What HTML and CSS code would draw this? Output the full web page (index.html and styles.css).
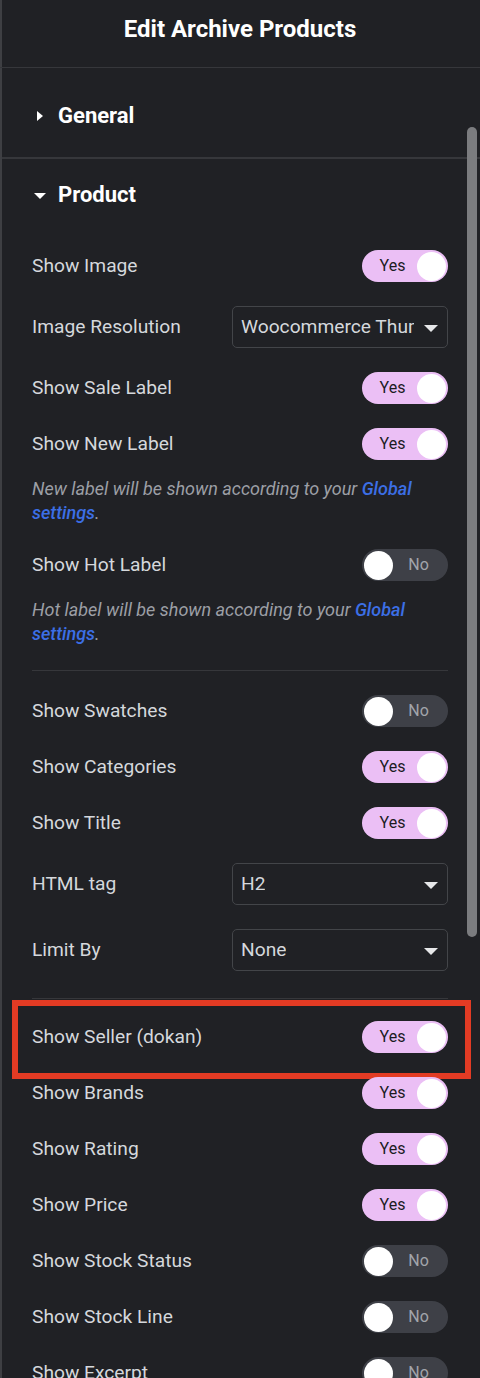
FILE: index.html
```html
<!DOCTYPE html>
<html lang="en">
<head>
<meta charset="utf-8">
<title>Edit Archive Products</title>
<link rel="stylesheet" href="styles.css">
</head>
<body>
<div class="panel">
  <header class="panel-header">
    <h1 class="panel-title">Edit Archive Products</h1>
  </header>

  <div class="panel-body">
    <section class="section section-closed">
      <div class="section-head">
        <span class="caret caret-right"></span>
        <span class="section-title">General</span>
      </div>
    </section>

    <section class="section section-open">
      <div class="section-head">
        <span class="caret caret-down"></span>
        <span class="section-title">Product</span>
      </div>

      <div class="controls">
        <div class="control">
          <span class="label">Show Image</span>
          <span class="switch on"><span class="switch-text">Yes</span><span class="knob"></span></span>
        </div>
        <div class="control control-select">
          <span class="label">Image Resolution</span>
          <span class="select"><span class="select-value">Woocommerce Thumbnail</span><span class="arrow"></span></span>
        </div>
        <div class="control">
          <span class="label">Show Sale Label</span>
          <span class="switch on"><span class="switch-text">Yes</span><span class="knob"></span></span>
        </div>
        <div class="control">
          <span class="label">Show New Label</span>
          <span class="switch on"><span class="switch-text">Yes</span><span class="knob"></span></span>
        </div>
        <p class="help">New label will be shown according to your <a class="help-link">Global settings</a>.</p>
        <div class="control">
          <span class="label">Show Hot Label</span>
          <span class="switch off"><span class="knob"></span><span class="switch-text">No</span></span>
        </div>
        <p class="help">Hot label will be shown according to your <a class="help-link">Global settings</a>.</p>

        <hr class="divider">

        <div class="control">
          <span class="label">Show Swatches</span>
          <span class="switch off"><span class="knob"></span><span class="switch-text">No</span></span>
        </div>
        <div class="control">
          <span class="label">Show Categories</span>
          <span class="switch on"><span class="switch-text">Yes</span><span class="knob"></span></span>
        </div>
        <div class="control">
          <span class="label">Show Title</span>
          <span class="switch on"><span class="switch-text">Yes</span><span class="knob"></span></span>
        </div>
        <div class="control control-select">
          <span class="label">HTML tag</span>
          <span class="select"><span class="select-value">H2</span><span class="arrow"></span></span>
        </div>
        <div class="control control-select">
          <span class="label">Limit By</span>
          <span class="select"><span class="select-value">None</span><span class="arrow"></span></span>
        </div>

        <hr class="divider divider-2">

        <div class="control highlight">
          <span class="label">Show Seller (dokan)</span>
          <span class="switch on"><span class="switch-text">Yes</span><span class="knob"></span></span>
        </div>
        <div class="control">
          <span class="label">Show Brands</span>
          <span class="switch on"><span class="switch-text">Yes</span><span class="knob"></span></span>
        </div>
        <div class="control">
          <span class="label">Show Rating</span>
          <span class="switch on"><span class="switch-text">Yes</span><span class="knob"></span></span>
        </div>
        <div class="control">
          <span class="label">Show Price</span>
          <span class="switch on"><span class="switch-text">Yes</span><span class="knob"></span></span>
        </div>
        <div class="control">
          <span class="label">Show Stock Status</span>
          <span class="switch off"><span class="knob"></span><span class="switch-text">No</span></span>
        </div>
        <div class="control">
          <span class="label">Show Stock Line</span>
          <span class="switch off"><span class="knob"></span><span class="switch-text">No</span></span>
        </div>
        <div class="control">
          <span class="label">Show Excerpt</span>
          <span class="switch off"><span class="knob"></span><span class="switch-text">No</span></span>
        </div>
      </div>
    </section>

    <div class="scrollbar"></div>
  </div>
</div>
</body>
</html>
```

FILE: styles.css
```css
* { box-sizing: border-box; }

html, body {
  margin: 0;
  padding: 0;
  background: #202125;
}

body {
  font-family: Roboto, "Liberation Sans", Arial, sans-serif;
  color: #d5d8dc;
  width: 480px;
  height: 1378px;
  overflow: hidden;
}

.panel {
  width: 480px;
  min-height: 1378px;
  background: #202125;
  border-left: 2px solid #3e3f43;
}

.panel-header {
  height: 68px;
  border-bottom: 1px solid #36373b;
  padding-top: 14px;
  margin-left: -2px;
}

.panel-title {
  margin: 0;
  font-size: 24px;
  line-height: 30px;
  font-weight: 700;
  color: #ffffff;
  text-align: center;
}

.panel-body {
  position: relative;
}

.section-closed {
  border-bottom: 2px solid #36373b;
  padding: 36px 0 29px;
}

.section-head {
  display: flex;
  align-items: center;
  height: 24px;
  padding-left: 32px;
}

.section-title {
  font-size: 22px;
  font-weight: 700;
  color: #ffffff;
  line-height: 24px;
}

.caret {
  display: inline-block;
  width: 0;
  height: 0;
}

.caret-right {
  margin-left: 3px;
  margin-right: 15px;
  border-top: 5px solid transparent;
  border-bottom: 5px solid transparent;
  border-left: 6px solid #ffffff;
}

.caret-down {
  margin-left: 0;
  margin-right: 12px;
  margin-top: 2px;
  border-left: 6px solid transparent;
  border-right: 6px solid transparent;
  border-top: 6px solid #ffffff;
}

.section-open {
  padding-top: 24px;
}

.controls {
  display: flex;
  flex-direction: column;
  padding: 43px 32px 0 30px;
}

.control {
  display: flex;
  align-items: center;
  justify-content: space-between;
  min-height: 32px;
  margin-bottom: 24px;
}

.control-select {
  min-height: 42px;
}

.label {
  font-size: 19.2px;
  line-height: 24px;
  color: #d5d8dc;
}

.switch {
  position: relative;
  display: flex;
  align-items: center;
  width: 86px;
  height: 32px;
  border-radius: 16px;
  padding: 2px;
}

.switch.on {
  background: #ebbff5;
  justify-content: flex-end;
}

.switch.off {
  background: #3e4047;
  justify-content: flex-start;
}

.knob {
  width: 29px;
  height: 29px;
  border-radius: 50%;
  background: #ffffff;
  flex: none;
}

.switch-text {
  flex: 1;
  text-align: center;
  font-size: 16px;
  line-height: 20px;
}

.switch.on .switch-text {
  color: #1c1c1f;
  padding-left: 4px;
}

.switch.off .switch-text {
  color: #a2a5ab;
  padding-right: 2px;
}

.select {
  position: relative;
  display: flex;
  align-items: center;
  width: 216px;
  height: 42px;
  border: 1px solid #434549;
  border-radius: 5px;
  padding: 0 33px 0 8px;
  overflow: hidden;
}

.select-value {
  font-size: 19.2px;
  line-height: 24px;
  color: #d5d8dc;
  white-space: nowrap;
  overflow: hidden;
}

.arrow {
  position: absolute;
  right: 9px;
  top: 18px;
  width: 0;
  height: 0;
  border-left: 7px solid transparent;
  border-right: 7px solid transparent;
  border-top: 7px solid #e6e7e9;
}

.help {
  margin: -7px 0 24px;
  font-size: 18px;
  line-height: 24px;
  font-style: italic;
  color: #9c9fa5;
}

.help-link {
  color: #3c6fe6;
  font-weight: 500;
}

.divider {
  border: 0;
  border-top: 1px solid #36373b;
  margin: 0 0 24px;
  height: 0;
  width: 100%;
}

.divider-2 {
  margin-top: 3px;
  margin-bottom: 22px;
}

.highlight {
  position: relative;
}

.highlight::after {
  content: "";
  position: absolute;
  top: -21px;
  bottom: -26px;
  left: -20px;
  right: -23px;
  border: 6px solid #e33b24;
  pointer-events: none;
}

.scrollbar {
  position: absolute;
  top: 59px;
  right: 3px;
  width: 10px;
  height: 810px;
  border-radius: 5px;
  background: #7b7c7f;
}
```
